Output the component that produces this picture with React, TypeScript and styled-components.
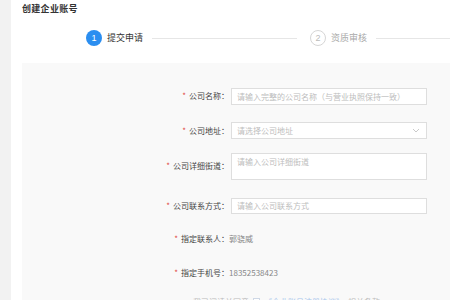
import React from "react";
import styled, { createGlobalStyle } from "styled-components";

const Global = createGlobalStyle`
  html, body { margin: 0; padding: 0; background: #fff; }
  body { font-family: "Noto Sans CJK SC", "Noto Sans", sans-serif; overflow: hidden; }
  * { box-sizing: border-box; }
`;

const Page = styled.div`
  display: flex;
  width: 450px;
  height: 300px;
  overflow: hidden;
`;

const SideStrip = styled.div`
  width: 11px;
  flex: none;
  background: #f2f2f2;
`;

const Main = styled.div`
  flex: 1;
  display: flex;
  flex-direction: column;
  padding-left: 11px;
  min-width: 0;
`;

const Title = styled.div`
  margin-top: 2px;
  height: 13px;
  line-height: 13px;
  font-size: 9px;
  font-weight: 700;
  color: #333;
  letter-spacing: 0.3px;
`;

const Steps = styled.div`
  display: flex;
  align-items: center;
  margin-top: 15px;
  height: 16px;
  padding-left: 64px;
`;

const Circle = styled.div<{ $active?: boolean }>`
  width: 16px;
  height: 16px;
  border-radius: 50%;
  flex: none;
  display: flex;
  align-items: center;
  justify-content: center;
  font-size: 9px;
  font-family: "Liberation Sans", sans-serif;
  background: ${(p) => (p.$active ? "#2b8ef0" : "#fff")};
  color: ${(p) => (p.$active ? "#fff" : "#bbb")};
  border: ${(p) => (p.$active ? "none" : "1px solid #d6d6d6")};
`;

const StepText = styled.div<{ $active?: boolean }>`
  margin-left: 5px;
  font-size: 9px;
  line-height: 16px;
  color: ${(p) => (p.$active ? "#333" : "#aaa")};
  white-space: nowrap;
`;

const StepLine = styled.div<{ $w?: number }>`
  height: 1px;
  background: #e6e6e6;
  margin: 0 13px 0 9px;
  ${(p) => (p.$w ? `width: ${p.$w}px; flex: none;` : "flex: 1; margin-right: 0;")}
`;

const Panel = styled.div`
  margin-top: 17px;
  flex: 1;
  background: #f9f9f9;
  padding-top: 25px;
  display: flex;
  flex-direction: column;
`;

const Row = styled.div<{ $gap: number }>`
  display: flex;
  align-items: flex-start;
  margin-bottom: ${(p) => p.$gap}px;
`;

const Label = styled.div<{ $h: number; $pt?: number }>`
  width: 207px;
  flex: none;
  height: ${(p) => p.$h}px;
  padding-top: ${(p) => p.$pt || 0}px;
  line-height: ${(p) => p.$h - (p.$pt || 0)}px;
  text-align: right;
  font-size: 8px;
  color: #444;
  white-space: nowrap;
`;

const Star = styled.span`
  color: #e0483e;
  margin-right: 3px;
  font-size: 8px;
`;

const Input = styled.div<{ $h: number }>`
  margin-left: 2px;
  width: 196px;
  height: ${(p) => p.$h}px;
  background: #fff;
  border: 1px solid #dedede;
  display: flex;
  align-items: flex-start;
  justify-content: space-between;
  padding: 0 6px 0 5px;
`;

const Placeholder = styled.span<{ $h: number }>`
  font-size: 8px;
  line-height: ${(p) => p.$h}px;
  color: #bdbdbd;
  white-space: nowrap;
`;

const Value = styled.span`
  font-size: 8px;
  color: #888;
  line-height: 16px;
  white-space: nowrap;
`;

const Agree = styled.div`
  display: flex;
  align-items: center;
  padding-left: 171px;
  font-size: 8px;
  color: #bbb;
  height: 12px;
  gap: 4px;
`;

const Check = styled.span`
  width: 7px;
  height: 7px;
  border: 1px solid #cfd8e6;
  background: #fff;
`;

const Link = styled.span`
  color: #a8c6ec;
`;

const Chevron = () => (
  <svg width="8" height="15" viewBox="0 0 8 15">
    <path d="M1 6 L4 9 L7 6" fill="none" stroke="#c4c4c4" strokeWidth="0.9" />
  </svg>
);

export default function App() {
  return (
    <>
      <Global />
      <Page>
        <SideStrip />
        <Main>
          <Title>创建企业账号</Title>
          <Steps>
            <Circle $active>1</Circle>
            <StepText $active>提交申请</StepText>
            <StepLine $w={145} />
            <Circle>2</Circle>
            <StepText>资质审核</StepText>
            <StepLine />
          </Steps>
          <Panel>
            <Row $gap={17}>
              <Label $h={16}><Star>*</Star>公司名称：</Label>
              <Input $h={17}>
                <Placeholder $h={15}>请输入完整的公司名称（与营业执照保持一致）</Placeholder>
              </Input>
            </Row>
            <Row $gap={14}>
              <Label $h={17}><Star>*</Star>公司地址：</Label>
              <Input $h={17}>
                <Placeholder $h={15}>请选择公司地址</Placeholder>
                <Chevron />
              </Input>
            </Row>
            <Row $gap={18}>
              <Label $h={22} $pt={3}><Star>*</Star>公司详细街道：</Label>
              <Input $h={27}>
                <Placeholder $h={16}>请输入公司详细街道</Placeholder>
              </Input>
            </Row>
            <Row $gap={17}>
              <Label $h={16}><Star>*</Star>公司联系方式：</Label>
              <Input $h={16}>
                <Placeholder $h={14}>请输入公司联系方式</Placeholder>
              </Input>
            </Row>
            <Row $gap={18}>
              <Label $h={16}><Star>*</Star>指定联系人：</Label>
              <Value>郭骁威</Value>
            </Row>
            <Row $gap={14}>
              <Label $h={16}><Star>*</Star>指定手机号：</Label>
              <Value>18352538423</Value>
            </Row>
            <Agree>
              <span>我已阅读并同意</span>
              <Check />
              <Link>《企业账号注册协议》</Link>
              <span>相关条款</span>
            </Agree>
          </Panel>
        </Main>
      </Page>
    </>
  );
}
